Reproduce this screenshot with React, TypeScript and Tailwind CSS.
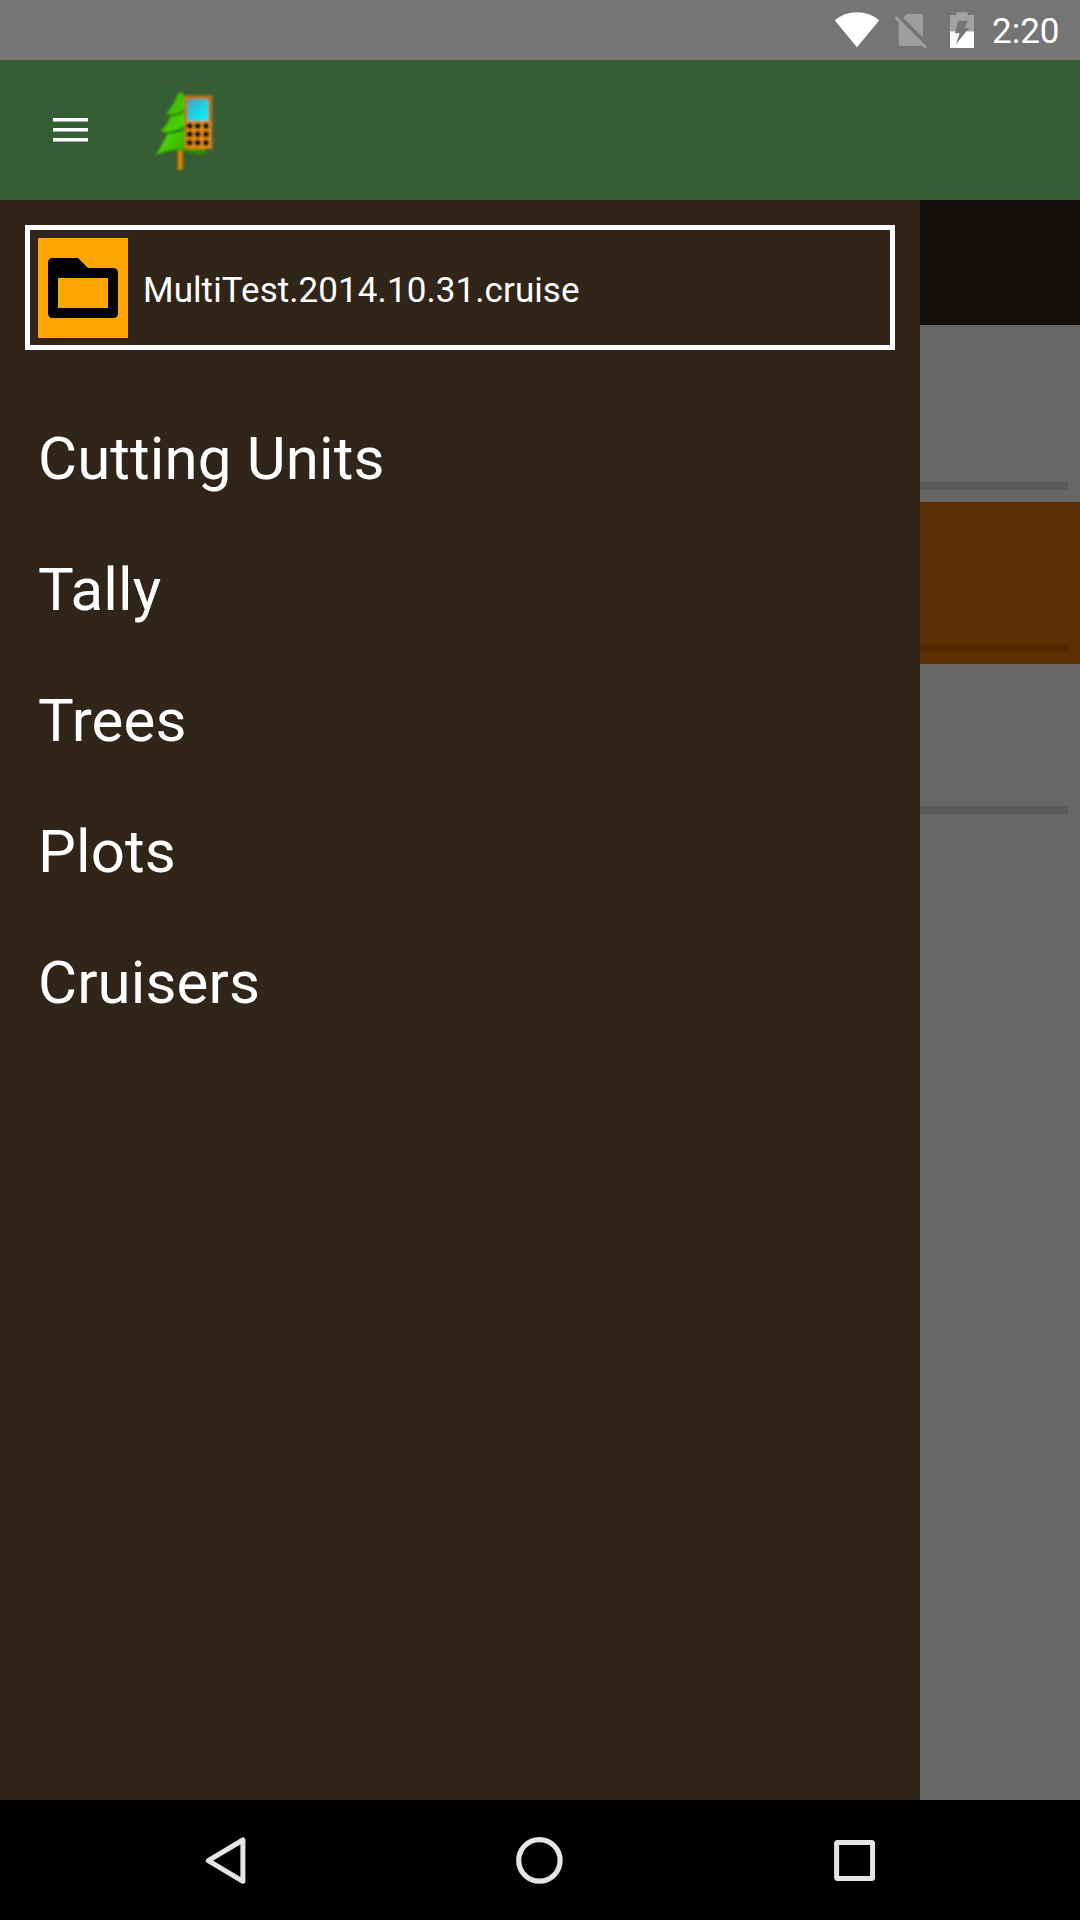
const menuItems = ['Cutting Units', 'Tally', 'Trees', 'Plots', 'Cruisers'];

function StatusBar() {
  return (
    <div className="flex h-[60px] shrink-0 items-center bg-[#757575] pl-[833px] text-white">
      <svg className="h-[60px] w-[48px] shrink-0" viewBox="39 0 144 180" fill="#fff">
        <path d="M44 61 Q74 37 111 37 Q148 37 178 61 L111 142 Z" />
      </svg>
      <svg className="ml-[11px] h-[60px] w-[36px] shrink-0" viewBox="216 0 108 180" fill="#9e9e9e">
        <path d="M266 42 H303 Q309 42 309 49 V112 L249 53 L259 44 Q262 42 266 42 Z" />
        <path d="M229 48 L321 140 L315 146 L304 136 Q302 138 298 138 H244 Q236 138 236 130 V68 L223 54 Z" />
      </svg>
      <svg className="ml-[20px] h-[60px] w-[28px] shrink-0" viewBox="384 0 84 180">
        <path fill="#a3a3a3" d="M390 94 V45 H409 V37 H443 V45 H462 V94 Z" />
        <path fill="#fff" d="M390 94 H462 V144 H390 Z" />
        <path fill="#757575" d="M414 62 H444 L434 84 H447 L408 133 L419 100 H405 Z" />
      </svg>
      <span className="ml-[16px] whitespace-nowrap pt-[3px] text-[35px] leading-[60px]">2:20</span>
    </div>
  );
}

function TreePhoneLogo() {
  return (
    <svg className="ml-[52px] h-[100px] w-[90px] shrink-0" viewBox="0 0 270 300">
      <defs>
        <linearGradient id="leaf" x1="0" y1="0" x2="1" y2="1">
          <stop offset="0" stopColor="#37a800" />
          <stop offset="0.5" stopColor="#49d003" />
          <stop offset="1" stopColor="#238c00" />
        </linearGradient>
        <linearGradient id="screen" x1="0" y1="0" x2="1" y2="1">
          <stop offset="0" stopColor="#4b9fbd" />
          <stop offset="0.6" stopColor="#13dbe9" />
          <stop offset="1" stopColor="#00f4fa" />
        </linearGradient>
        <filter id="soft" x="-10%" y="-10%" width="120%" height="120%">
          <feGaussianBlur stdDeviation="2.6" />
        </filter>
      </defs>
      <g filter="url(#soft)">
        <path fill="#8a5c0a" d="M111 205 H131 V270 H111 Z" />
        <path fill="#d98a06" d="M115 205 H126 V269 H115 Z" />
        <path
          fill="url(#leaf)"
          d="M120 36 Q127 36 134 50 L165 120 L198 218 Q190 228 174 222 Q145 210 112 211 Q78 213 46 225 Q60 208 84 158 L62 154 Q78 138 95 104 L78 102 Q97 80 112 44 Q116 36 120 36 Z"
        />
        <path fill="#1f7d0a" d="M84 104 Q108 104 132 90 V98 Q112 109 94 108 Z" />
        <path fill="#1f7d0a" d="M68 157 Q104 157 134 139 V149 Q108 163 82 161 Z" />
        <path fill="#2a8d05" d="M50 223 Q80 206 134 206 L192 218 Q160 226 134 213 Q90 208 50 223 Z" />
        <path fill="#7d6a4a" d="M134 44 H218 V210 H210 V207 H134 Z" />
        <path fill="#c0700d" d="M134 47 H215 V207 H134 Z" />
        <path fill="#ec900c" d="M138 123 H212 V204 H138 Z" />
        <path fill="#a46a22" d="M140 56 H208 V124 H140 Z" />
        <path fill="url(#screen)" d="M142 58 H205 V122 H142 Z" />
        <g fill="#11181f">
          {[138, 163, 188].map((cy) =>
            [149, 173, 198].map((cx) => (
              <rect key={`${cx}-${cy}`} x={cx - 9} y={cy - 9} width="18" height="18" rx="5" />
            )),
          )}
        </g>
      </g>
    </svg>
  );
}

function AppBar() {
  return (
    <header className="flex h-[140px] shrink-0 items-center bg-[#355e35] pl-[53px]">
      <div className="flex h-[24px] w-[35px] shrink-0 flex-col justify-between">
        <div className="h-[4px] border-b border-[#9ab09a] bg-white" />
        <div className="h-[4px] border-b border-[#9ab09a] bg-white" />
        <div className="h-[4px] border-b border-[#9ab09a] bg-white" />
      </div>
      <TreePhoneLogo />
    </header>
  );
}

function Drawer() {
  return (
    <aside className="flex w-[920px] shrink-0 flex-col bg-[#31251a] text-white">
      <div className="mx-[25px] mt-[25px] flex h-[125px] shrink-0 items-center border-[5px] border-white pl-[8px]">
        <div className="flex h-[100px] w-[90px] items-center justify-center bg-[#ffa500]">
          <svg className="h-[60px] w-[70px]" viewBox="0 0 70 60">
            <path
              fill="#000"
              fillRule="evenodd"
              d="M5 0 H30 L40 10 H65 Q70 10 70 15 V55 Q70 60 65 60 H5 Q0 60 0 55 V5 Q0 0 5 0 Z M10 20 V50 H60 V20 Z"
            />
          </svg>
        </div>
        <span className="ml-[15px] whitespace-nowrap pt-[6px] text-[35px] leading-[41px] tracking-[0.08px]">
          MultiTest.2014.10.31.cruise
        </span>
      </div>
      <nav className="mt-[43px] flex flex-col pl-[38px]">
        {menuItems.map((item) => (
          <a key={item} className="h-[131px] whitespace-nowrap text-[60px] leading-[131px] tracking-[0.12px]">
            {item}
          </a>
        ))}
      </nav>
    </aside>
  );
}

function DimmedPage() {
  return (
    <main className="flex flex-1 flex-col bg-[#666666]">
      <div className="h-[125px] bg-[#140f0b]" />
      <div className="flex h-[177px] flex-col justify-end pr-[12px] pb-[12px]">
        <div className="h-[8px] bg-[#5a5a5a]" />
      </div>
      <div className="flex h-[162px] flex-col justify-end bg-[#5f2f04] pr-[12px] pb-[12px]">
        <div className="h-[8px] bg-[#532903]" />
      </div>
      <div className="flex h-[162px] flex-col justify-end pr-[12px] pb-[12px]">
        <div className="h-[8px] bg-[#5a5a5a]" />
      </div>
    </main>
  );
}

function NavigationBar() {
  return (
    <footer className="flex h-[120px] shrink-0 items-center bg-black pl-[200px]">
      <svg className="h-[60px] w-[50px] shrink-0" viewBox="0 0 50 60" fill="none" stroke="#e5e5e5" strokeWidth="5" strokeLinejoin="round">
        <path d="M8.3 30.7 L42.9 10 V51.3 Z" />
      </svg>
      <svg className="ml-[260px] h-[60px] w-[60px] shrink-0" viewBox="0 0 60 60" fill="none" stroke="#e5e5e5" strokeWidth="5.2">
        <circle cx="29.4" cy="30.4" r="20.7" />
      </svg>
      <svg className="ml-[260px] h-[60px] w-[50px] shrink-0" viewBox="0 0 50 60" fill="none" stroke="#e5e5e5" strokeWidth="5" strokeLinejoin="round">
        <rect x="6.6" y="12.4" width="36" height="36" rx="1" />
      </svg>
    </footer>
  );
}

export default function App() {
  return (
    <div className="flex h-[1920px] w-[1080px] flex-col overflow-hidden bg-[#666666] font-[Roboto,sans-serif]">
      <StatusBar />
      <AppBar />
      <div className="flex min-h-0 flex-1">
        <Drawer />
        <DimmedPage />
      </div>
      <NavigationBar />
    </div>
  );
}
